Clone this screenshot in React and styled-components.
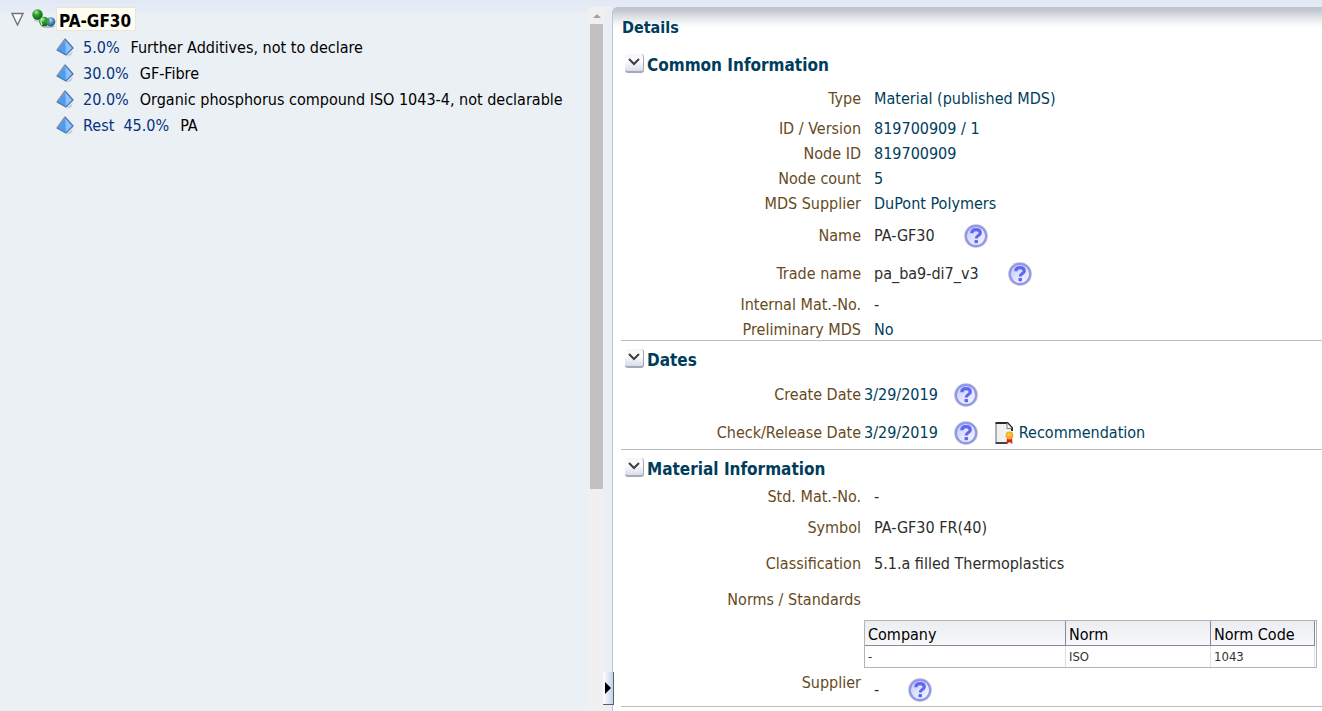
import React, { useState } from "react";
import styled, { createGlobalStyle } from "styled-components";

const GlobalStyle = createGlobalStyle`
  * {
    box-sizing: border-box;
  }
  body {
    margin: 0;
    background: #ebf0f5;
    font-family: "DejaVu Sans Condensed", "DejaVu Sans", "Noto Sans", sans-serif;
    font-size: 16px;
    line-height: 20px;
    color: #000;
  }
  button {
    font: inherit;
    padding: 0;
    border: 0;
    background: none;
    cursor: pointer;
  }
  svg {
    display: block;
    flex: none;
  }
`;

const Page = styled.div`
  display: grid;
  grid-template-columns: 612fr 710fr;
  min-height: 100vh;
  padding-top: 7px;
  background: linear-gradient(#e1e9f4, #e7edf7 12px, #ebf0f5 13px);
`;

const TreePane = styled.div`
  position: relative;
  display: flex;
  min-width: 0;
`;

const Tree = styled.ul`
  flex: 1;
  min-width: 0;
  margin: 0;
  padding: 0 0 0 11px;
  list-style: none;
`;

const Branch = styled.ul`
  margin: 0;
  padding: 3px 0 0 45px;
  list-style: none;
`;

const RootRow = styled.div`
  display: flex;
  align-items: center;
  height: 24px;
`;

const TreeToggle = styled.button`
  margin-right: 8px;
`;

const RootName = styled.span`
  height: 24px;
  padding: 3px 4px 0 2px;
  border: 1px solid #e6e6dc;
  background: #fffdf0;
  font-size: 17px;
  line-height: 20px;
  font-weight: bold;
  white-space: nowrap;
`;

const Leaf = styled.li`
  display: flex;
  align-items: center;
  gap: 9px;
  height: 26px;
  padding-top: 2px;
  white-space: nowrap;
`;

const Share = styled.span`
  padding-right: 2px;
  color: #06347e;
`;

const ScrollTrack = styled.div`
  flex: none;
  display: flex;
  flex-direction: column;
  align-items: center;
  width: 17px;
  background: #f0f0f0;
`;

const ScrollArrow = styled.button`
  display: flex;
  align-items: center;
  justify-content: center;
  width: 17px;
  height: 17px;
`;

const ScrollThumb = styled.div`
  width: 13px;
  height: 66%;
  background: #c1c1c1;
`;

const Splitter = styled.div`
  flex: none;
  width: 7px;
  background: #e9eff5;
`;

const SplitHandle = styled.button`
  position: absolute;
  right: -2px;
  bottom: 6px;
  z-index: 1;
  display: flex;
  align-items: center;
  justify-content: center;
  width: 11px;
  height: 33px;
  border-right: 1px solid #56606f;
  border-bottom: 1px solid #56606f;
  background: linear-gradient(90deg, #fff, #c3d2e8);
`;

const Details = styled.main`
  min-width: 0;
  padding-left: 8px;
  border-left: 1px solid #c0c4d4;
  border-top-left-radius: 6px;
  background: linear-gradient(#bdc2cf, #c5c9d4 4px, #dfe2e6 10px, #f6f7f8 17px, #fff 21px);
`;

const Title = styled.h1`
  margin: 0;
  padding: 3px 0 0 1px;
  font-size: 16px;
  line-height: 36px;
  color: #003d5b;
`;

const SectionBox = styled.section`
  display: flex;
  flex-direction: column;
  gap: 5px;
  padding-top: 5px;
  border-bottom: 1px solid #bcbcbc;
`;

const SectionHead = styled.h2`
  display: flex;
  align-items: center;
  gap: 3px;
  height: 27px;
  margin: 0;
  padding-left: 4px;
  font-size: 17px;
  color: #003d5b;
`;

const Disclose = styled.button`
  display: flex;
  align-items: center;
  justify-content: center;
  width: 19px;
  height: 19px;
  margin-bottom: 3px;
  border-right: 1px solid #a3a8bb;
  border-bottom: 2px solid #a3a8bb;
  border-radius: 3px;
  background: linear-gradient(#f5f6f8, #fdfdfe 40%, #d9dde8);
`;

const ROW_HEIGHTS = { short: 20, medium: 31, tall: 33 };

const FieldRow = styled.div`
  display: grid;
  grid-template-columns: 240px minmax(0, 1fr);
  align-items: ${props => (props.$labelTop ? "start" : "center")};
  height: ${props => ROW_HEIGHTS[props.$size]}px;
  white-space: nowrap;
`;

const Label = styled.span`
  text-align: right;
  color: #664a22;
`;

const Value = styled.div`
  display: flex;
  align-items: center;
  align-self: center;
  gap: ${props => (props.$tight ? 16 : 29)}px;
  padding-left: ${props => (props.$tight ? 3 : 13)}px;
  color: ${props => (props.$plain ? "#2d2d2d" : "#003d5b")};
`;

const HelpButton = styled.button`
  border-radius: 50%;
`;

const DocLink = styled.a`
  display: flex;
  align-items: center;
  gap: 5px;
  color: #003d5b;
  text-decoration: none;
`;

const NormTable = styled.table`
  width: 453px;
  margin-left: 243px;
  padding: 0 1px 0 0;
  border: 1px solid #b4b4b4;
  border-spacing: 0;
  table-layout: fixed;
  text-align: left;
`;

const Th = styled.th`
  width: ${props => props.$width}px;
  height: 25px;
  padding: 3px 3px 0;
  border-right: 1px solid #848a96;
  border-bottom: 1px solid #848a96;
  background: linear-gradient(#ecedf2, #f8f8fa);
  font-weight: normal;
  white-space: nowrap;
`;

const Td = styled.td`
  height: 21px;
  padding: 0 3px;
  border-right: 1px solid #dcdfe3;
  font-size: 13px;
  color: #333;
`;

const materials = [
  { share: "5.0%", name: "Further Additives, not to declare" },
  { share: "30.0%", name: "GF-Fibre" },
  { share: "20.0%", name: "Organic phosphorus compound ISO 1043-4, not declarable" },
  { share: "Rest\u00a0 45.0%", name: "PA" }
];

const norms = [{ company: "-", norm: "ISO", code: "1043" }];

const MoleculeIcon = () => (
  <svg width="24" height="20" viewBox="0 0 24 20" aria-hidden="true">
    <defs>
      <radialGradient id="ballGreen" cx="38%" cy="28%" r="70%">
        <stop offset="0" stopColor="#b5eda4" />
        <stop offset="0.4" stopColor="#35a12f" />
        <stop offset="1" stopColor="#0c6212" />
      </radialGradient>
      <radialGradient id="ballBlue" cx="42%" cy="32%" r="70%">
        <stop offset="0" stopColor="#d5e9ff" />
        <stop offset="0.5" stopColor="#548dc8" />
        <stop offset="1" stopColor="#174786" />
      </radialGradient>
    </defs>
    <ellipse cx="8" cy="11" rx="6" ry="2" fill="#9aa39c" opacity="0.5" />
    <ellipse cx="16" cy="17.500" rx="7" ry="1.5" fill="#858f91" opacity="0.6" />
    <circle cx="5.500" cy="5.500" r="5.200" fill="url(#ballGreen)" />
    <circle cx="12" cy="12.500" r="4.800" fill="url(#ballGreen)" />
    <path d="M10 9q-2 3 0 7" fill="none" stroke="#c4f0b8" strokeWidth="1.4" />
    <circle cx="18.700" cy="12.800" r="4.600" fill="url(#ballBlue)" />
    <path d="M14.500 10q2-2 3 0t-1 6q-3-1-2-6" fill="#3b9a45" opacity="0.8" />
  </svg>
);

const PyramidIcon = () => (
  <svg width="18" height="20" viewBox="0 0 18 20" aria-hidden="true">
    <path d="M2 15l8 4 7-6-2 4-5 2z" fill="#9aa4b0" opacity="0.6" />
    <path d="M9 1L1 12l9 5z" fill="#4c9df2" />
    <path d="M9 1l8 9-7 7z" fill="#8cc3ff" />
    <path d="M9 1L1 12l9 5 7-7z" fill="none" stroke="#4a74a8" strokeWidth="1.200" strokeLinejoin="round" />
    <path d="M9 2.500L10 16" stroke="#5fa8f6" strokeWidth="1" />
    <path d="M9 1.500L1.500 11.500" stroke="#8a98a9" strokeWidth="1.500" />
  </svg>
);

const HelpIcon = () => (
  <svg width="24" height="24" viewBox="0 0 24 24" aria-hidden="true">
    <defs>
      <linearGradient id="helpFill" x1="0" y1="0" x2="1" y2="1">
        <stop offset="0" stopColor="#bcc5ff" />
        <stop offset="0.5" stopColor="#dfe4ff" />
        <stop offset="1" stopColor="#f4f5ff" />
      </linearGradient>
    </defs>
    <circle cx="12" cy="12" r="11.800" fill="#b9bac6" />
    <circle cx="12" cy="12" r="10" fill="url(#helpFill)" stroke="#8d95ee" strokeWidth="1.800" />
    <path
      d="M7.800 9.200C7.900 6.700 9.700 5.700 12 5.700c2.500 0 4.300 1.100 4.300 3.200 0 2.800-4 2.500-4 5.600"
      fill="none"
      stroke="#6166f2"
      strokeWidth="3.200"
    />
    <rect x="10.500" y="16" width="3.500" height="3.200" rx="0.8" fill="#6166f2" />
  </svg>
);

const DocumentIcon = () => (
  <svg width="20" height="24" viewBox="0 0 20 24" aria-hidden="true">
    <path d="M2 2h11l5 6v14H2z" fill="#f1f1f1" />
    <path d="M2 2v20" stroke="#999" strokeWidth="1.5" />
    <path d="M1.5 2h12l4.5 5v3" fill="none" stroke="#292929" strokeWidth="2" />
    <path d="M13 2v5.5h5" fill="#fff" stroke="#777" strokeWidth="1" />
    <path d="M1.5 22h12" stroke="#444" strokeWidth="2" />
    <path d="M13 17l-.5 6 3-2 3 2-.5-6z" fill="#e51b17" />
    <circle cx="15.5" cy="14.5" r="3.9" fill="#f3ab21" />
    <circle cx="15" cy="13.7" r="2" fill="#ffc84a" />
  </svg>
);

const Help = ({ topic }) => (
  <HelpButton type="button" aria-label={"Help: " + topic}>
    <HelpIcon />
  </HelpButton>
);

const Field = ({ label, size = "short", help, tight, plain, labelTop, extra, children }) => (
  <FieldRow $size={size} $labelTop={labelTop}>
    <Label>{label}</Label>
    <Value $tight={tight} $plain={plain}>
      <span>{children}</span>
      {help && <Help topic={label} />}
      {extra}
    </Value>
  </FieldRow>
);

const Section = ({ title, children }) => {
  const [open, setOpen] = useState(true);
  return (
    <SectionBox>
      <SectionHead>
        <Disclose type="button" aria-label={title} aria-expanded={open} onClick={() => setOpen(!open)}>
          <svg width="12" height="8" viewBox="0 0 12 8" aria-hidden="true">
            <path d="M1 1l5 5 5-5" fill="none" stroke="#3c3e43" strokeWidth="2" />
          </svg>
        </Disclose>
        {title}
      </SectionHead>
      {open && children}
    </SectionBox>
  );
};

const MaterialTree = () => {
  const [open, setOpen] = useState(true);
  return (
    <Tree>
      <li>
        <RootRow>
          <TreeToggle type="button" aria-label="PA-GF30" aria-expanded={open} onClick={() => setOpen(!open)}>
            <svg width="13" height="14" viewBox="0 0 13 14" aria-hidden="true">
              <path d="M1 1.5h11L6.5 13z" fill="#fff" stroke="#707277" strokeWidth="1.4" />
            </svg>
          </TreeToggle>
          <MoleculeIcon />
          <RootName>PA-GF30</RootName>
        </RootRow>
        {open && (
          <Branch>
            {materials.map(item => (
              <Leaf key={item.name}>
                <PyramidIcon />
                <Share>{item.share}</Share>
                <span>{item.name}</span>
              </Leaf>
            ))}
          </Branch>
        )}
      </li>
    </Tree>
  );
};

export default function App() {
  return (
    <>
      <GlobalStyle />
      <Page>
        <TreePane>
          <MaterialTree />
          <ScrollTrack>
            <ScrollArrow type="button" aria-label="Scroll up">
              <svg width="8" height="4" viewBox="0 0 8 4" aria-hidden="true">
                <path d="M0 4l4-4 4 4z" fill="#a3a3a3" />
              </svg>
            </ScrollArrow>
            <ScrollThumb />
          </ScrollTrack>
          <Splitter />
          <SplitHandle type="button" aria-label="Expand pane">
            <svg width="6" height="12" viewBox="0 0 6 12" aria-hidden="true">
              <path d="M0 0l6 6-6 6z" fill="#000" />
            </svg>
          </SplitHandle>
        </TreePane>
        <Details>
          <Title>Details</Title>
          <Section title="Common Information">
            <Field label="Type" size="medium">Material (published MDS)</Field>
            <Field label="ID / Version">819700909 / 1</Field>
            <Field label="Node ID">819700909</Field>
            <Field label="Node count">5</Field>
            <Field label="MDS Supplier">DuPont Polymers</Field>
            <Field label="Name" size="tall" plain help>PA-GF30</Field>
            <Field label="Trade name" size="tall" plain help>pa_ba9-di7_v3</Field>
            <Field label="Internal Mat.-No." plain>-</Field>
            <Field label="Preliminary MDS">No</Field>
          </Section>
          <Section title="Dates">
            <Field label="Create Date" size="tall" tight help>3/29/2019</Field>
            <Field
              label="Check/Release Date"
              size="tall"
              tight
              help
              extra={
                <DocLink href="#recommendation">
                  <DocumentIcon />
                  Recommendation
                </DocLink>
              }
            >
              3/29/2019
            </Field>
          </Section>
          <Section title="Material Information">
            <Field label="Std. Mat.-No." plain>-</Field>
            <Field label="Symbol" size="medium" plain>PA-GF30 FR(40)</Field>
            <Field label="Classification" size="medium" plain>5.1.a filled Thermoplastics</Field>
            <Field label="Norms / Standards" size="medium" />
            <NormTable>
              <thead>
                <tr>
                  <Th $width={201}>Company</Th>
                  <Th $width={145}>Norm</Th>
                  <Th $width={104}>Norm Code</Th>
                </tr>
              </thead>
              <tbody>
                {norms.map(row => (
                  <tr key={row.code}>
                    <Td>{row.company}</Td>
                    <Td>{row.norm}</Td>
                    <Td>{row.code}</Td>
                  </tr>
                ))}
              </tbody>
            </NormTable>
            <Field label="Supplier" size="tall" plain help labelTop>-</Field>
          </Section>
        </Details>
      </Page>
    </>
  );
}
